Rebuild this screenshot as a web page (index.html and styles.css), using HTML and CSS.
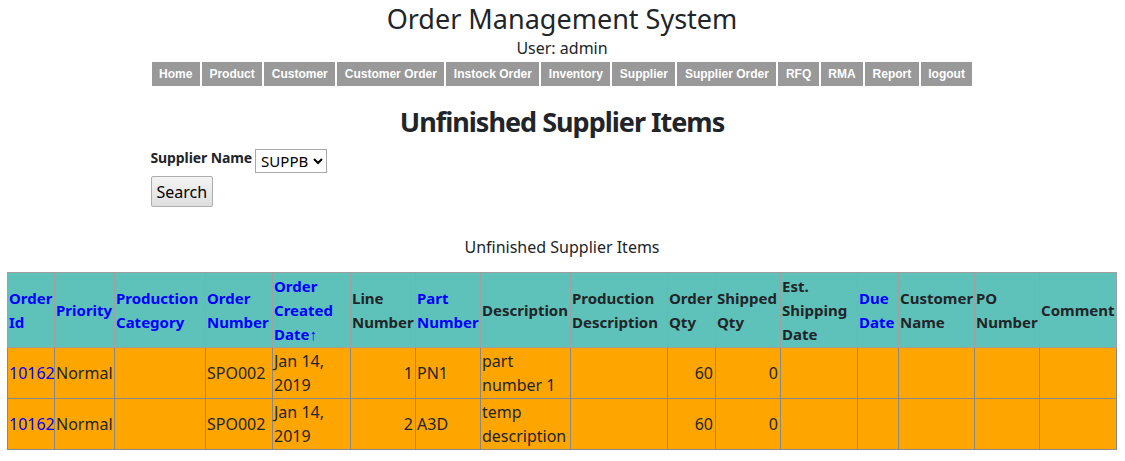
FILE: index.html
```html
<!DOCTYPE html>
<html lang="en">
<head>
  <meta charset="UTF-8">
  <title>Unfinished Supplier Items</title>
  <link rel="stylesheet" href="styles.css">
</head>
<body>

  <!-- Header -->
  <div class="header">
    <h1>Order Management System</h1>
    <div class="user">User: admin</div>
    <ul class="menu">
      <li><a href="#">Home</a></li>
      <li><a href="#">Product</a></li>
      <li><a href="#">Customer</a></li>
      <li><a href="#">Customer Order</a></li>
      <li><a href="#">Instock Order</a></li>
      <li><a href="#">Inventory</a></li>
      <li><a href="#">Supplier</a></li>
      <li><a href="#">Supplier Order</a></li>
      <li><a href="#">RFQ</a></li>
      <li><a href="#">RMA</a></li>
      <li><a href="#">Report</a></li>
      <li><a href="#">logout</a></li>
    </ul>
  </div>

  <h2>Unfinished Supplier Items</h2>

  <!-- Search Form -->
  <div class="search-form">
    <form method="GET" action="#">
      <div class="field">
        <label for="supplier">Supplier Name</label>
        <select id="supplier" name="supplier">
          <option>SUPPB</option>
        </select>
      </div>
      <button type="submit">Search</button>
    </form>
  </div>

  <!-- Items Table -->
  <table class="items">
    <caption>Unfinished Supplier Items</caption>
    <thead>
      <tr>
        <th><a href="#">Order Id</a></th>
        <th><a href="#">Priority</a></th>
        <th><a href="#">Production Category</a></th>
        <th><a href="#">Order Number</a></th>
        <th><a href="#">Order Created Date&#8593;</a></th>
        <th>Line Number</th>
        <th><a href="#">Part Number</a></th>
        <th>Description</th>
        <th>Production Description</th>
        <th>Order Qty</th>
        <th>Shipped Qty</th>
        <th>Est. Shipping Date</th>
        <th><a href="#">Due Date</a></th>
        <th>Customer Name</th>
        <th>PO Number</th>
        <th>Comment</th>
      </tr>
    </thead>
    <tbody>
      <tr>
        <td><a href="#">10162</a></td>
        <td>Normal</td>
        <td></td>
        <td>SPO002</td>
        <td>Jan 14, 2019</td>
        <td class="num">1</td>
        <td>PN1</td>
        <td>part number 1</td>
        <td></td>
        <td class="num">60</td>
        <td class="num">0</td>
        <td></td>
        <td></td>
        <td></td>
        <td></td>
        <td></td>
      </tr>
      <tr>
        <td><a href="#">10162</a></td>
        <td>Normal</td>
        <td></td>
        <td>SPO002</td>
        <td>Jan 14, 2019</td>
        <td class="num">2</td>
        <td>A3D</td>
        <td>temp description</td>
        <td></td>
        <td class="num">60</td>
        <td class="num">0</td>
        <td></td>
        <td></td>
        <td></td>
        <td></td>
        <td></td>
      </tr>
    </tbody>
  </table>

</body>
</html>
```

FILE: styles.css
```css
* {
  box-sizing: border-box;
}

body {
  margin: 0 8px 8px 7px;
  font-family: 'Noto Sans', 'Open Sans', sans-serif;
  font-size: 16px;
  line-height: 1.5;
  color: #212529;
  background: #ffffff;
}

a {
  color: #0000ff;
  text-decoration: none;
}

/* Header */
.header {
  text-align: center;
}

.header h1 {
  font-size: 27px;
  font-weight: normal;
  line-height: 37px;
  margin: 0;
}

.user {
  margin-top: -1px;
}

.menu {
  list-style: none;
  margin: 2px auto 0;
  padding: 0;
  display: flex;
  justify-content: center;
}

.menu li {
  border-right: 2px solid #ffffff;
}

.menu li:last-child {
  border-right: none;
}

.menu a {
  display: block;
  background: #999999;
  color: #ffffff;
  font-family: 'Liberation Sans', Arial, sans-serif;
  font-size: 12px;
  font-weight: bold;
  line-height: 24px;
  padding: 0 7.5px;
}

h2 {
  font-size: 27px;
  font-weight: bold;
  letter-spacing: -1px;
  line-height: 1.2;
  text-align: center;
  margin: 20px 0 10px;
}

/* Search form */
.search-form {
  width: 823px;
  margin: 0 auto;
}

.field {
  display: flex;
  align-items: flex-start;
  gap: 3px;
  margin-bottom: 2px;
}

.field label {
  font-size: 14px;
  font-weight: bold;
  line-height: 20px;
  letter-spacing: -0.1px;
}

.field select {
  font-family: inherit;
  font-size: 15px;
  height: 24px;
  margin-top: 1px;
  padding: 0 1px;
  border: 1px solid #a9a9a9;
  border-radius: 0;
  background: #ffffff;
  color: #000000;
}

.search-form button {
  font-family: inherit;
  font-size: 16px;
  height: 31px;
  margin-top: 1px;
  padding: 0 5px;
  border: 1px solid #adadad;
  border-radius: 2px;
  background: linear-gradient(#f4f4f4, #dedede);
  color: #000000;
}

/* Table */
.items {
  width: 100%;
  table-layout: fixed;
  border-collapse: collapse;
  margin-top: 28px;
}

.items caption {
  padding-bottom: 13px;
}

.items th,
.items td {
  border: 1px solid #888888;
  padding: 1px 2px 1px 1px;
  text-align: left;
}

.items th {
  background: #5fc2ba;
  border-color: #a0a0a0;
  font-size: 15px;
  line-height: 24px;
  vertical-align: middle;
}

.items td {
  background: #ffa500;
  height: 50px;
}

.items td.num {
  text-align: right;
}

.items th:nth-child(1) { width: 47px; }
.items th:nth-child(2) { width: 60px; }
.items th:nth-child(3) { width: 91px; }
.items th:nth-child(4) { width: 67px; }
.items th:nth-child(5) { width: 78px; }
.items th:nth-child(6) { width: 65px; }
.items th:nth-child(7) { width: 65px; }
.items th:nth-child(8) { width: 90px; }
.items th:nth-child(9) { width: 97px; }
.items th:nth-child(10) { width: 48px; }
.items th:nth-child(11) { width: 65px; }
.items th:nth-child(12) { width: 77px; }
.items th:nth-child(13) { width: 41px; }
.items th:nth-child(14) { width: 76px; }
.items th:nth-child(15) { width: 65px; }
.items th:nth-child(16) { width: 77px; }
```
